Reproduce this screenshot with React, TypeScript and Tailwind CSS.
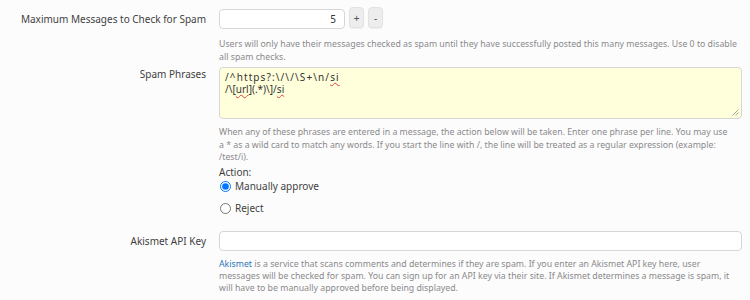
import React from "react";

function Squiggle({ children }: { children: React.ReactNode }) {
  return (
    <span className="underline decoration-wavy decoration-[#e0453a] decoration-1 underline-offset-[1px]">{children}</span>
  );
}

function StepButton({ label }: { label: string }) {
  return (
    <div className="w-[15px] h-[21px] rounded-[4px] bg-[#ededed] border border-[#e2e2e2] shadow-[0_1px_1px_rgba(0,0,0,0.06)] flex items-center justify-center text-[10px] leading-none text-[#505050]">
      {label}
    </div>
  );
}

export default function App() {
  return (
    <div className="w-[750px] h-[300px] overflow-hidden bg-[#fcfcfd] text-[#4a4a4a] font-['Noto_Sans',sans-serif]">
      <div className="grid grid-cols-[219px_1fr] pr-[8px] pt-[9px]">
        {/* Maximum messages */}
        <div className="text-right pr-[13px] text-[10px] leading-[20px] text-[#3f3f3f]">
          Maximum Messages to Check for Spam
        </div>
        <div>
          <div className="flex items-start gap-[4px]">
            <div className="w-[126px] h-[20px] border border-[#d6d6d6] rounded-[4px] bg-white flex items-center justify-end pr-[8px] text-[10px] text-[#333]">
              5
            </div>
            <div className="flex gap-[4px] -mt-[2px]">
              <StepButton label="+" />
              <StepButton label="-" />
            </div>
          </div>
          <div className="mt-[9px] text-[8.75px] leading-[12.5px] text-[#8a8a8a]">
            Users will only have their messages checked as spam until they have successfully posted this many messages. Use 0 to disable all spam checks.
          </div>
        </div>

        {/* Spam phrases */}
        <div className="mt-[4px] text-right pr-[13px] text-[10px] leading-[14px] text-[#3f3f3f]">Spam Phrases</div>
        <div className="mt-[4px]">
          <div className="relative h-[52px] border border-[#d6d6d6] rounded-[4px] bg-[#ffffdc] pl-[5px] pt-[3px] text-[10px] leading-[12px] text-[#333]">
            <div className="tracking-[1.1px]">
              /^https?:\/\/\S+\n/<Squiggle>si</Squiggle>
            </div>
            <div>
              /\[<Squiggle>url</Squiggle>](.*)\]/<Squiggle>si</Squiggle>
            </div>
            <svg className="absolute right-[2px] bottom-[2px]" width="7" height="7" viewBox="0 0 7 7">
              <line x1="6.5" y1="0.5" x2="0.5" y2="6.5" stroke="#9a9a9a" strokeWidth="0.9" />
              <line x1="6.5" y1="3.5" x2="3.5" y2="6.5" stroke="#9a9a9a" strokeWidth="0.9" />
            </svg>
          </div>
          <div className="mt-[7px] pr-[8px] text-[8.75px] leading-[12.5px] text-[#8a8a8a]">
            When any of these phrases are entered in a message, the action below will be taken. Enter one phrase per line. You may use a * as a wild card to match any words. If you start the line with /, the line will be treated as a regular expression (example: /test/i).
          </div>
          <div className="mt-[1px] text-[10px] leading-[14px] text-[#3f3f3f]">Action:</div>
          <label className="flex items-center gap-[4px] h-[16px] text-[10px] text-[#3f3f3f]">
            <input type="radio" name="act" defaultChecked className="w-[11px] h-[11px] m-0 ml-[1px]" />
            Manually approve
          </label>
          <label className="mt-[6px] flex items-center gap-[4px] h-[16px] text-[10px] text-[#3f3f3f]">
            <input type="radio" name="act" className="w-[11px] h-[11px] m-0 ml-[1px]" />
            Reject
          </label>
        </div>

        {/* Akismet */}
        <div className="mt-[14px] text-right pr-[13px] text-[10px] leading-[20px] text-[#3f3f3f]">Akismet API Key</div>
        <div className="mt-[14px]">
          <div className="h-[20px] border border-[#d6d6d6] rounded-[4px] bg-white" />
          <p className="mt-[7px] text-[8.75px] leading-[12px] text-[#8a8a8a]">
            <a className="text-[#2d78b7]">Akismet</a> is a service that scans comments and determines if they are spam. If you enter an Akismet API key here, user messages will be checked for spam. You can sign up for an API key via their site. If Akismet determines a message is spam, it will have to be manually approved before being displayed.
          </p>
        </div>
      </div>
    </div>
  );
}
